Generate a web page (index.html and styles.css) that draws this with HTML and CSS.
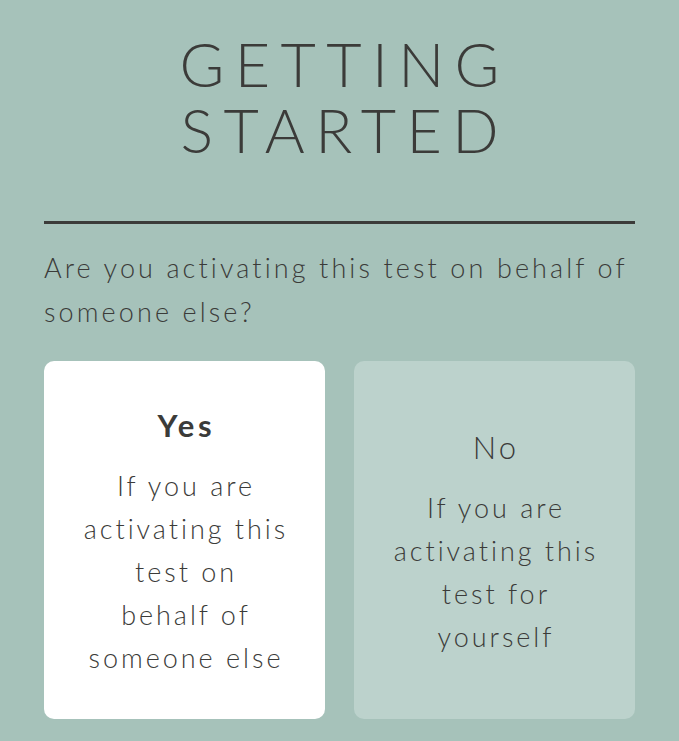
FILE: index.html
```html
<!DOCTYPE html>
<html>
<head>
	<title>Getting Started</title>
	<link rel="stylesheet" href="styles.css">
</head>
<body>
	<div class="page">
		<h1 class="title">GETTING<br>STARTED</h1>
		<div class="rule"></div>
		<p class="question">Are you activating this test on behalf of someone else?</p>

		<div class="choices">
			<div class="choice selected">
				<h2 class="choice-title">Yes</h2>
				<p class="choice-text">If you are<br>activating this<br>test on<br>behalf of<br>someone else</p>
			</div>
			<div class="choice">
				<h2 class="choice-title">No</h2>
				<p class="choice-text">If you are<br>activating this<br>test for<br>yourself</p>
			</div>
		</div>
	</div>
</body>
</html>
```

FILE: styles.css
```css
* {
	margin: 0;
	padding: 0;
	box-sizing: border-box;
}

body {
	background-color: #a6c2ba;
	color: #3b3b39;
	font-family: "Lato", "Liberation Sans", sans-serif;
	font-weight: 300;
}

.page {
	padding: 31px 44px 22px;
}

.title {
	font-size: 61px;
	line-height: 66px;
	font-weight: 300;
	letter-spacing: 0.17em;
	padding-left: 0.17em;
	text-align: center;
}

.rule {
	height: 3px;
	background-color: #3b3b39;
	margin-top: 58px;
}

.question {
	font-size: 27px;
	line-height: 44px;
	margin-top: 22px;
	letter-spacing: 0.115em;
}

.choices {
	display: grid;
	grid-template-columns: 1fr 1fr;
	gap: 29px;
	margin-top: 27px;
}

.choice {
	height: 358px;
	border-radius: 10px;
	background-color: #bcd2cc;
	display: flex;
	flex-direction: column;
	justify-content: center;
	align-items: center;
	text-align: center;
	padding-top: 6px;
}

.choice.selected {
	background-color: #ffffff;
}

.choice-title {
	font-size: 31px;
	line-height: 36px;
	font-weight: 300;
	letter-spacing: 0.1em;
	padding-left: 0.1em;
}

.choice.selected .choice-title {
	font-weight: 700;
	letter-spacing: 0.12em;
	padding-left: 0.12em;
}

.choice-text {
	font-size: 27px;
	line-height: 43px;
	margin-top: 21px;
	letter-spacing: 0.11em;
	padding-left: 0.11em;
}
```
